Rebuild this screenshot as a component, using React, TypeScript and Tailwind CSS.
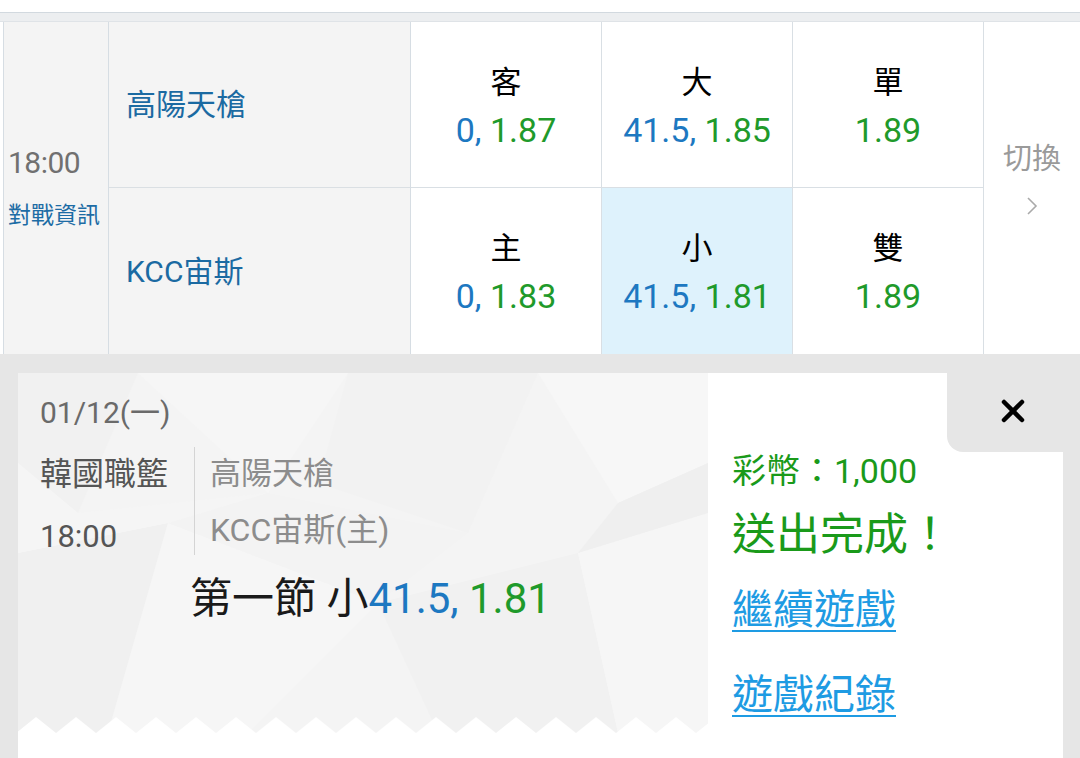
import { X } from "lucide-react";

const blue = "text-[#1d78c1]";
const green = "text-[#1f9a2b]";

type Odd = { label: string; line?: string; price: string; active?: boolean };

const topRow: Odd[] = [
  { label: "客", line: "0", price: "1.87" },
  { label: "大", line: "41.5", price: "1.85" },
  { label: "單", price: "1.89" },
];

const bottomRow: Odd[] = [
  { label: "主", line: "0", price: "1.83" },
  { label: "小", line: "41.5", price: "1.81", active: true },
  { label: "雙", price: "1.89" },
];

function OddCell({ odd, last }: { odd: Odd; last?: boolean }) {
  return (
    <div
      className={`w-[191px] h-[166px] pt-[6px] flex flex-col items-center justify-center border-r border-[#d9dfe4] ${
        last ? "" : "border-b"
      } ${odd.active ? "bg-[#def2fc]" : "bg-white"}`}
    >
      <div className="text-[31px] leading-[44px] text-black">{odd.label}</div>
      <div className="text-[34px] leading-[50px]">
        {odd.line && <span className={blue}>{odd.line}, </span>}
        <span className={green}>{odd.price}</span>
      </div>
    </div>
  );
}

function Texture() {
  return (
    <svg className="absolute inset-0" width="690" height="360" viewBox="0 0 690 360">
      <rect width="690" height="360" fill="#f4f4f4" />
      <polygon points="0,0 120,0 60,140 0,90" fill="#f1f1f1" />
      <polygon points="120,0 330,0 250,120" fill="#f6f6f6" />
      <polygon points="330,0 520,0 450,160 300,110" fill="#f2f2f2" />
      <polygon points="520,0 690,0 690,90 600,130" fill="#f7f7f7" />
      <polygon points="0,180 150,150 90,360 0,360" fill="#f0f0f0" />
      <polygon points="150,150 360,230 230,360 90,360" fill="#f6f6f6" />
      <polygon points="360,230 560,180 600,360 420,360" fill="#f1f1f1" />
      <polygon points="560,180 690,140 690,360 600,360" fill="#f6f6f6" />
      <polygon points="600,130 690,90 690,140 560,180" fill="#efefef" />
      <polygon points="250,120 450,160 360,230 150,150" fill="#f3f3f3" />
      <polygon points="60,140 250,120 150,150 0,180 0,90" fill="#f5f5f5" />
    </svg>
  );
}

function Zigzag() {
  const teeth = [];
  for (let x = -2; x < 690; x += 40) {
    teeth.push(`${x},16 ${x + 20},0 ${x + 40},16`);
  }
  return (
    <svg className="absolute left-0 bottom-0" width="690" height="16" viewBox="0 0 690 16">
      {teeth.map((p, i) => (
        <polygon key={i} points={p} fill="#ffffff" />
      ))}
    </svg>
  );
}

export default function App() {
  return (
    <div className="w-[1080px] h-[758px] overflow-hidden bg-white font-['Roboto','Noto_Sans_CJK_TC',sans-serif]">
      <div className="h-[13px] bg-white border-b border-[#d2d9df]" />
      <div className="h-[9px] bg-[#eceef0] border-b border-[#dfe3e7]" />

      <div className="flex h-[332px] pl-[3px] bg-white">
        <div className="w-[106px] bg-[#f4f4f4] border-l border-r border-[#d6dde3] flex flex-col justify-center pl-[4px]">
          <div className="text-[30px] leading-[36px] text-[#707070] tracking-[-0.5px]">18:00</div>
          <div className="mt-[20px] text-[23px] leading-[30px] text-[#1d6ca5]">對戰資訊</div>
        </div>

        <div className="w-[302px] bg-[#f4f4f4] border-r border-[#d6dde3] flex flex-col">
          <div className="h-[166px] border-b border-[#dadfe3] flex items-center pl-[17px] text-[30px] text-[#1b6aa2]">
            高陽天槍
          </div>
          <div className="h-[166px] flex items-center pl-[17px] text-[30px] text-[#1b6aa2]">KCC宙斯</div>
        </div>

        <div className="flex flex-col">
          <div className="flex">
            {topRow.map((o) => (
              <OddCell key={o.label} odd={o} />
            ))}
          </div>
          <div className="flex">
            {bottomRow.map((o) => (
              <OddCell key={o.label} odd={o} last />
            ))}
          </div>
        </div>

        <div className="flex-1 bg-white flex flex-col items-center justify-center pb-[20px]">
          <div className="text-[29px] leading-[36px] text-[#9a9a9a]">切換</div>
          <svg className="mt-[19px]" width="12" height="20" viewBox="0 0 12 20">
            <polyline points="2,2 10,10 2,18" fill="none" stroke="#aaaaaa" strokeWidth="1.6" />
          </svg>
        </div>
      </div>

      <div className="h-[404px] bg-[#e6e6e6] pt-[19px] pl-[18px]">
        <div className="flex w-[1045px] h-[385px]">
          <div className="relative w-[690px] h-[385px] bg-white">
            <div className="relative w-[690px] h-[360px] overflow-hidden">
              <Texture />
              <Zigzag />
              <div className="relative pl-[22px] pt-[20px]">
                <div className="text-[30px] leading-[40px] text-[#6a6a6a]">01/12(一)</div>
                <div className="flex mt-[21px]">
                  <div className="w-[154px] flex flex-col">
                    <div className="text-[32px] leading-[40px] text-[#555555]">韓國職籃</div>
                    <div className="mt-[23px] text-[31px] leading-[40px] text-[#555555]">18:00</div>
                  </div>
                  <div className="w-px h-[108px] -mt-[7px] bg-[#d4d4d4]" />
                  <div className="pl-[15px] flex flex-col">
                    <div className="text-[31px] leading-[40px] text-[#8c8c8c]">高陽天槍</div>
                    <div className="mt-[16px] text-[32px] leading-[40px] text-[#8c8c8c]">KCC宙斯(主)</div>
                  </div>
                </div>
                <div className="mt-[16px] pl-[150px] text-[42px] leading-[52px] text-[#1a1a1a] whitespace-nowrap">
                  第一節 小<span className={blue}>41.5, </span>
                  <span className={green}>1.81</span>
                </div>
              </div>
            </div>
          </div>

          <div className="relative w-[355px] h-[385px] bg-white pl-[24px] pt-[76px]">
            <div className="absolute top-0 right-0 w-[116px] h-[79px] bg-[#e6e6e6] rounded-bl-[16px] flex items-center justify-center pl-[16px] pb-[4px]">
              <X className="w-[36px] h-[36px] text-black" strokeWidth={3} />
            </div>
            <div className="text-[34px] leading-[44px] text-[#1a9a1a]">彩幣：1,000</div>
            <div className="mt-[10px] text-[44px] leading-[64px] text-[#1a9a1a]">送出完成！</div>
            <div className="mt-[16px] text-[41px] leading-[54px] text-[#1e9be3] underline underline-offset-[6px] decoration-2">
              繼續遊戲
            </div>
            <div className="mt-[31px] text-[41px] leading-[54px] text-[#1e9be3] underline underline-offset-[6px] decoration-2">
              遊戲紀錄
            </div>
          </div>
        </div>
      </div>
    </div>
  );
}
